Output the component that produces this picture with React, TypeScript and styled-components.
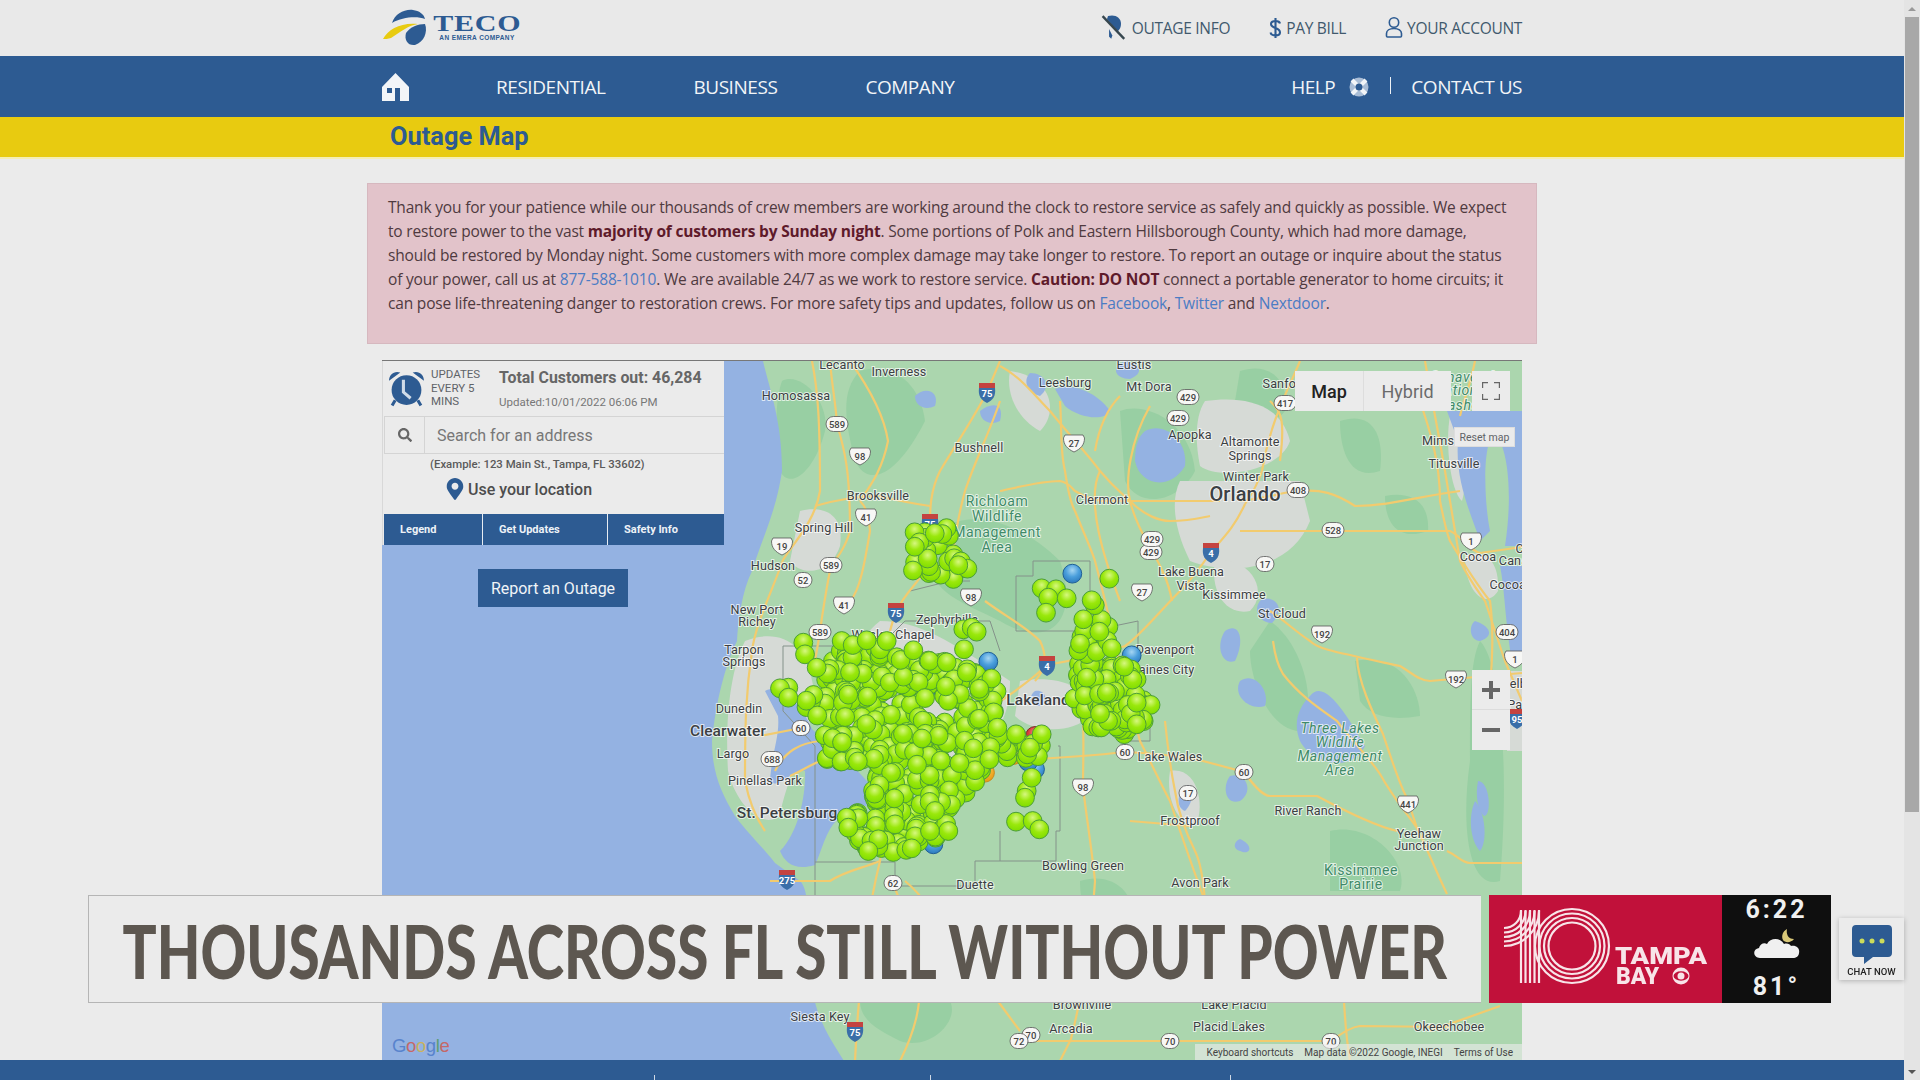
import React from 'react';
import styled, { createGlobalStyle } from 'styled-components';
import { FaSearch, FaMapMarkerAlt } from 'react-icons/fa';

const GlobalStyle = createGlobalStyle`
  html, body { margin: 0; padding: 0; height: 100%; overflow: hidden; background: #ebebeb; }
  #root { height: 100%; }
`;

const Shell = styled.div`
  display: flex;
  height: 1080px;
  width: 1920px;
  overflow: hidden;
`;
const Page = styled.div`
  width: 1904px;
  height: 1080px;
  display: flex;
  flex-direction: column;
  overflow: hidden;
  font-family: "Open Sans", "Noto Sans", sans-serif;
`;
const Scrollbar = styled.div`
  width: 16px;
  height: 1080px;
  background: #e4e4e4;
  display: flex;
  flex-direction: column;
  align-items: center;
`;
const ScrollArrow = styled.div<{ $down?: boolean }>`
  height: 17px;
  width: 16px;
  display: flex;
  align-items: center;
  justify-content: center;
  margin-top: ${({ $down }) => ($down ? 'auto' : '0')};
  &::after {
    content: '';
    border-left: 4px solid transparent;
    border-right: 4px solid transparent;
    ${({ $down }) => ($down ? 'border-top: 4px solid #555;' : 'border-bottom: 4px solid #999;')}
  }
`;
const ScrollThumb = styled.div`
  width: 14px;
  height: 795px;
  background: #a8a8a8;
`;
const Container = styled.div`
  width: 1140px;
  margin: 0 auto;
  display: flex;
  align-items: center;
`;

const UtilityBar = styled.div`
  height: 56px;
  background: #e9e9e9;
  flex: none;
`;
const UtilityInner = styled(Container)`
  height: 56px;
  justify-content: space-between;
`;
const Logo = styled.div`
  display: flex;
  align-items: center;
  height: 40px;
`;
const LogoWords = styled.div`
  display: flex;
  flex-direction: column;
  align-items: center;
  width: 90px;
  margin-top: -3px;
`;
const LogoName = styled.span`
  font-family: "Liberation Serif", serif;
  font-weight: 700;
  font-size: 24px;
  line-height: 22px;
  letter-spacing: 0.6px;
  color: #2d5b92;
  display: inline-block;
  transform: scaleX(1.25);
`;
const LogoTag = styled.span`
  font-family: "Liberation Sans", sans-serif;
  font-size: 6.5px;
  font-weight: 700;
  line-height: 8px;
  color: #2d5b92;
  letter-spacing: 0.4px;
  white-space: nowrap;
`;
const UtilityLinks = styled.div`
  display: flex;
  gap: 39px;
  align-items: center;
`;
const UtilityLink = styled.a`
  display: flex;
  align-items: center;
  gap: 4px;
  color: #41596d;
  font-size: 15.5px;
  letter-spacing: -0.3px;
  white-space: nowrap;
`;

const NavBar = styled.nav`
  height: 61px;
  background: #2d5b92;
  flex: none;
`;
const NavInner = styled(Container)`
  height: 61px;
`;
const NavLinks = styled.div`
  display: flex;
  gap: 88px;
  margin-left: 87px;
`;
const NavLink = styled.a`
  color: #f2f5f8;
  font-size: 19px;
  letter-spacing: -0.45px;
  white-space: nowrap;
`;
const NavRight = styled.div`
  margin-left: auto;
  display: flex;
  align-items: center;
`;
const NavDivider = styled.span`
  width: 1px;
  height: 17px;
  background: #eef2f6;
  margin: -3px 20px 0 21px;
`;

const TitleBand = styled.div`
  height: 40px;
  background: #e8cb10;
  border-bottom: 2px solid #f4eeb4;
  flex: none;
`;
const TitleInner = styled(Container)`
  height: 38px;
`;
const PageTitle = styled.h1`
  margin: 0 0 0 8px;
  font-family: "Roboto", sans-serif;
  font-weight: 700;
  font-size: 25.4px;
  color: #2d5b92;
`;

const AlertBox = styled.div`
  width: 1170px;
  height: 161px;
  box-sizing: border-box;
  margin: 24px auto 16px;
  padding: 11px 20px 0;
  background: #e2c3ca;
  border: 1px solid #d6b8bf;
  color: #4f3a3f;
  font-size: 15.5px;
  line-height: 24px;
  letter-spacing: -0.18px;
  flex: none;
  white-space: nowrap;
`;
const Strong = styled.strong`
  color: #5e1a2a;
  font-weight: 700;
`;
const AlertLink = styled.a`
  color: #4b7cc4;
`;

const MapFrame = styled.div`
  position: relative;
  width: 1140px;
  height: 700px;
  margin: 0 auto;
  flex: none;
  overflow: hidden;
  background: #94b2e2;
  border-top: 1px solid #777;
  box-sizing: border-box;
`;
const MapCanvas = styled.svg`
  display: block;
  width: 1140px;
  height: 700px;
`;
const Footer = styled.footer`
  height: 20px;
  flex: none;
  background: #2d5b92;
  position: relative;
  display: grid;
  grid-template-columns: 655px 276px 300px 1fr;
`;
const FooterCell = styled.div`
  height: 5px;
  margin-top: 15px;
  border-right: 1px solid #cfd9e6;
  &:last-child { border-right: 0; }
`;

const SidePanel = styled.div`
  position: absolute;
  left: 0;
  top: 0;
  width: 342px;
  background: #ebebeb;
  border-left: 1px solid #d8d8d8;
  box-sizing: border-box;
  font-family: "Roboto", sans-serif;
`;
const StatusRow = styled.div`
  height: 55px;
  display: flex;
  align-items: center;
  padding-left: 5px;
`;
const UpdatesNote = styled.div`
  width: 68px;
  margin-left: 6px;
  font-size: 11.5px;
  line-height: 13.5px;
  color: #5f6368;
`;
const StatusText = styled.div`
  display: flex;
  flex-direction: column;
  gap: 9px;
`;
const TotalOut = styled.div`
  font-size: 15.9px;
  font-weight: 700;
  color: #666;
  line-height: 18px;
`;
const UpdatedAt = styled.div`
  font-size: 11.5px;
  color: #777;
  line-height: 13px;
`;
const SearchRow = styled.div`
  height: 38px;
  display: flex;
  margin-left: 1px;
  border-top: 1px solid #d4d4d4;
  border-bottom: 1px solid #d4d4d4;
  box-sizing: border-box;
`;
const SearchIconCell = styled.div`
  width: 39px;
  display: flex;
  align-items: center;
  justify-content: center;
  border-right: 1px solid #d4d4d4;
  border-left: 1px solid #d4d4d4;
  color: #666;
  font-size: 14px;
`;
const SearchInput = styled.div`
  flex: 1;
  padding-left: 12px;
  display: flex;
  align-items: center;
  font-size: 16px;
  color: #777;
`;
const ExampleText = styled.div`
  margin: 2px 0 0 47px;
  font-size: 11.4px;
  font-weight: 500;
  line-height: 16px;
  color: #5a5a5a;
`;
const LocationRow = styled.div`
  display: flex;
  align-items: center;
  gap: 2px;
  margin: 5px 0 0 61px;
  height: 24px;
  font-size: 16px;
  font-weight: 500;
  color: #4d4d4d;
  svg { color: #2d5b92; font-size: 22px; }
`;
const TabRow = styled.div`
  height: 31px;
  margin: 13px 0 0 1px;
  display: grid;
  grid-template-columns: 99px 125px 1fr;
  background: #2d5b92;
`;
const Tab = styled.div`
  display: flex;
  align-items: center;
  padding-left: 16px;
  color: #eef2f7;
  font-size: 11px;
  font-weight: 700;
  border-right: 1px solid #e8edf3;
  &:last-child { border-right: 0; }
`;
const ReportButton = styled.button`
  position: absolute;
  left: 96px;
  top: 208px;
  width: 150px;
  height: 38px;
  border: 0;
  padding: 0;
  background: #2d5b92;
  color: #f0f4f8;
  font-family: "Roboto", sans-serif;
  font-size: 16px;
`;

const MapTypeGroup = styled.div`
  position: absolute;
  left: 913px;
  top: 10px;
  height: 40px;
  display: flex;
  background: #ebebeb;
  font-family: "Roboto", sans-serif;
  font-size: 18px;
`;
const MapType = styled.div<{ $active?: boolean }>`
  display: flex;
  align-items: center;
  justify-content: center;
  width: ${({ $active }) => ($active ? '68px' : '87px')};
  color: ${({ $active }) => ($active ? '#222' : '#6b6b6b')};
  font-weight: ${({ $active }) => ($active ? 500 : 400)};
  border-right: ${({ $active }) => ($active ? '1px solid #ddd' : '0')};
`;
const ControlBox = styled.div`
  position: absolute;
  left: 1090px;
  width: 38px;
  background: #ebebeb;
  display: flex;
  align-items: center;
  justify-content: center;
`;
const FullscreenButton = styled(ControlBox)`
  top: 10px;
  height: 40px;
`;
const ZoomGroup = styled(ControlBox)`
  top: 309px;
  height: 80px;
  flex-direction: column;
`;
const ZoomButton = styled.div`
  height: 40px;
  width: 100%;
  display: flex;
  align-items: center;
  justify-content: center;
  &:first-child { border-bottom: 1px solid #dcdcdc; box-sizing: border-box; }
`;
const ResetMap = styled.div`
  position: absolute;
  left: 1072px;
  top: 66px;
  width: 61px;
  height: 20px;
  background: #ebebeb;
  border: 1px solid #ddd;
  box-sizing: border-box;
  font-family: "Roboto", sans-serif;
  font-size: 10.5px;
  color: #5f6368;
  display: flex;
  align-items: center;
  justify-content: center;
`;
const Attribution = styled.div`
  position: absolute;
  right: 0;
  bottom: 0;
  height: 16px;
  padding: 0 9px 0 12px;
  display: flex;
  align-items: center;
  gap: 11px;
  background: rgba(235, 235, 235, 0.62);
  font-family: "Roboto", sans-serif;
  font-size: 10px;
  color: #444;
  white-space: nowrap;
`;
const GoogleMark = styled.div`
  position: absolute;
  left: 10px;
  bottom: 3px;
  font-family: "Liberation Sans", sans-serif;
  font-size: 18.5px;
  letter-spacing: -0.4px;
  opacity: 0.8;
`;
const GoogleLetter = styled.span<{ $c: string }>`
  color: ${({ $c }) => $c};
`;

const LowerThird = styled.div`
  position: fixed;
  left: 88px;
  top: 895px;
  height: 108px;
  display: flex;
`;
const HeadlinePanel = styled.div`
  width: 1393px;
  box-sizing: border-box;
  background: #ebebeb;
  border: 1px solid #b5b5b5;
  border-right: 0;
  padding: 3px 0 0;
  display: flex;
  align-items: center;
  justify-content: center;
  overflow: hidden;
`;
const Headline = styled.div`
  font-family: "Lato", sans-serif;
  font-weight: 900;
  font-size: 74px;
  line-height: 100px;
  color: #5d5750;
  white-space: nowrap;
  transform: scaleX(0.765);
  flex: none;
`;
const BrandPanel = styled.div`
  width: 233px;
  margin-left: 8px;
  background: #c1113a;
  flex: none;
`;
const BrandText = styled.text`
  font-family: "Roboto", sans-serif;
  font-weight: 900;
  font-size: 23px;
  fill: #f8e4e8;
`;
const WeatherPanel = styled.div`
  width: 109px;
  background: #0f0f0f;
  flex: none;
  display: flex;
  flex-direction: column;
  align-items: center;
  justify-content: space-between;
  color: #f0f0f0;
  font-family: "Roboto", sans-serif;
  font-weight: 700;
  font-size: 25px;
  letter-spacing: 3px;
  padding: 0 0 1px;
  box-sizing: border-box;
`;
const WeatherLine = styled.div`
  line-height: 30px;
`;
const WeatherGlyph = styled.div`
  display: flex;
  margin-bottom: 9px;
`;
const ChatWidget = styled.div`
  position: fixed;
  left: 1839px;
  top: 918px;
  width: 65px;
  height: 62px;
  background: #ebebeb;
  box-shadow: 0 1px 5px rgba(0, 0, 0, 0.25);
  display: flex;
  flex-direction: column;
  align-items: center;
  padding-top: 6px;
  box-sizing: border-box;
`;
const ChatLabel = styled.div`
  font-family: "Roboto", sans-serif;
  font-size: 9.5px;
  font-weight: 500;
  color: #222;
  margin-top: 1px;
  white-space: nowrap;
`;

// map drawing, all values are page coordinates (viewBox starts at the map corner)
type Kind = 'city' | 'park' | 'italic' | 'big' | 'metro';
const labelSize: Record<Kind, string> = { city: '12.6px', park: '14px', italic: '14px', big: '15.5px', metro: '20px' };
const MapLabel = styled.text<{ $kind?: Kind }>`
  font-family: "Roboto", sans-serif;
  text-anchor: middle;
  paint-order: stroke;
  stroke: rgba(255, 255, 255, 0.7);
  stroke-width: 2px;
  font-size: ${({ $kind }) => labelSize[$kind || 'city']};
  font-weight: ${({ $kind }) => ($kind === 'big' || $kind === 'metro' ? 500 : 400)};
  letter-spacing: ${({ $kind }) => ($kind === 'park' || $kind === 'italic' ? '0.5px' : '0.1px')};
  fill: ${({ $kind }) => ($kind === 'park' || $kind === 'italic' ? '#3f8a68' : '#3c4043')};
  font-style: ${({ $kind }) => ($kind === 'italic' ? 'italic' : 'normal')};
`;
const ShieldText = styled.text`
  font-family: "Roboto", sans-serif;
  font-size: 9.5px;
  font-weight: 500;
  text-anchor: middle;
  fill: #444;
`;
const InterstateText = styled.text`
  font-family: "Roboto", sans-serif;
  font-size: 9.5px;
  font-weight: 700;
  text-anchor: middle;
  fill: #fff;
`;

const water: string[] = [
  'M382 360H763C770 390 782 420 782 470C776 510 765 530 752 570C742 590 738 620 737 640C725 665 716 700 712 740C712 770 720 790 735 815C750 835 762 845 775 862L800 880C810 890 808 920 811 980C816 1020 832 1040 844 1060H382Z',
  'M765 690C780 682 800 700 812 728C830 745 850 760 872 786C878 800 860 812 838 818C825 830 822 850 815 864C795 870 785 862 780 850C800 830 806 790 805 770C790 768 780 790 770 780C772 750 780 735 778 715Z',
  'M1447 410H1522V545H1505C1512 500 1510 450 1495 432C1482 440 1484 500 1490 530L1480 540C1470 510 1455 480 1458 440Z',
  'M1500 565H1522V660H1512C1505 620 1505 590 1500 565Z',
  'M1125 360C1140 362 1145 372 1130 378C1115 378 1110 366 1125 360Z',
  'M1055 388C1075 380 1100 395 1110 410C1105 420 1080 418 1065 405Z',
  'M1145 430C1165 420 1188 440 1185 465C1170 490 1140 485 1135 460C1135 445 1138 436 1145 430Z',
  'M1030 372C1045 372 1052 385 1040 395C1028 392 1022 380 1030 372Z',
  'M1225 630C1240 620 1245 640 1235 660C1222 665 1215 645 1225 630Z',
  'M1262 598C1278 595 1285 610 1272 622C1258 622 1252 606 1262 598Z',
  'M1310 695C1325 675 1350 720 1365 745C1350 775 1310 760 1300 740C1292 720 1300 705 1310 695Z',
  'M1240 680C1255 670 1270 690 1265 705C1250 710 1232 695 1240 680Z',
  'M1230 775C1245 770 1255 790 1240 800C1225 805 1222 785 1230 775Z',
  'M1185 785C1195 780 1195 800 1185 810C1175 806 1178 792 1185 785Z',
  'M1240 838C1255 845 1250 855 1240 850C1232 848 1234 840 1240 838Z',
  'M1475 800C1485 810 1488 840 1480 850C1470 840 1468 815 1475 800Z',
  'M1478 780C1490 780 1492 815 1484 815C1478 810 1475 795 1478 780Z',
  'M1475 620C1490 625 1495 635 1480 640C1470 640 1468 625 1475 620Z',
  'M980 410C990 402 1005 400 1000 420C990 425 980 420 980 410Z',
  'M915 395C925 385 940 390 935 405C925 410 915 405 915 395Z',
  'M1035 690C1045 688 1050 700 1040 705C1030 705 1028 695 1035 690Z',
];
const darkLand: string[] = [
  'M782 380C800 370 830 400 825 430C815 470 790 490 780 470C775 430 775 400 782 380Z',
  'M860 370C890 360 920 380 925 420C900 470 870 490 855 460C845 420 840 390 860 370Z',
  'M930 540C960 500 1020 520 1060 560C1080 620 1050 650 1000 620C960 600 920 590 930 540Z',
  'M1120 410C1145 400 1190 420 1195 470C1180 500 1140 510 1125 480Z',
  'M1240 370C1270 360 1290 380 1285 410C1270 430 1240 420 1235 400Z',
  'M1340 420C1370 410 1385 430 1380 470C1350 480 1340 450 1340 420Z',
  'M1385 495C1410 490 1430 500 1428 530C1400 540 1385 525 1385 495Z',
  'M1355 660C1400 650 1420 690 1420 715C1390 720 1370 715 1360 700Z',
  'M1270 620C1300 640 1320 700 1300 730C1270 730 1250 680 1250 650Z',
  'M1330 830C1370 820 1410 860 1400 890H1330Z',
  'M1480 640C1500 660 1510 760 1500 880C1470 890 1460 830 1470 760C1470 700 1470 660 1480 640Z',
  'M860 1000H950C960 1020 930 1050 900 1040C880 1030 860 1020 860 1000Z',
  'M1080 880C1110 870 1140 890 1130 925C1100 940 1080 920 1080 880Z',
];
const urban: string[] = [
  'M1180 480H1300L1310 520C1290 570 1230 575 1190 560C1175 530 1170 500 1180 480Z',
  'M1205 400C1240 395 1280 400 1290 440C1280 470 1220 480 1200 465C1195 440 1195 415 1205 400Z',
  'M800 510C820 505 845 510 840 545C830 575 800 575 790 560Z',
  'M745 640C770 630 810 630 815 700C810 735 785 780 780 815C760 830 735 800 728 770C725 720 730 670 745 640Z',
  'M1020 680C1050 675 1090 680 1090 715C1070 735 1030 730 1015 715Z',
  'M1450 415C1470 420 1470 470 1462 500C1450 490 1445 440 1450 415Z',
  'M1465 555C1480 548 1500 555 1498 590C1485 610 1465 590 1465 555Z',
  'M880 620C920 620 950 640 1010 680C1010 760 940 770 870 760C830 740 830 660 880 620Z',
  'M1215 560C1250 555 1270 590 1250 610C1225 615 1210 590 1215 560Z',
  'M1170 770C1200 765 1205 810 1195 825C1180 825 1165 800 1170 770Z',
  'M1010 370C1050 375 1060 410 1040 430C1020 420 1005 395 1010 370Z',
  'M1507 670H1522V750H1507Z',
];
const roads: string[] = [
  'M1000 360L987 391C975 415 958 440 940 470C930 490 930 510 930 522V560C926 575 905 590 896 611C885 640 880 680 880 720C884 770 885 820 880 860C870 900 860 960 855 1060',
  'M1000 400C990 430 975 460 965 490C958 515 955 535 952 560',
  'M812 360C818 390 820 420 820 490C815 520 795 540 783 559C772 590 755 625 752 650C746 690 745 720 745 780C750 805 758 820 765 830',
  'M830 360C832 385 836 405 837 423C845 450 850 470 850 530C845 548 835 560 831 564C826 590 822 615 820 631L815 660',
  'M1245 503C1235 525 1225 535 1211 551C1198 570 1185 585 1180 590C1160 610 1140 635 1125 645C1095 655 1070 660 1047 664C1030 680 1015 690 1005 697C985 712 965 720 950 725L880 730',
  'M1000 365C1020 375 1035 395 1050 410C1070 435 1085 450 1100 470C1115 488 1125 495 1130 500C1145 515 1160 520 1170 520C1190 520 1200 517 1210 515',
  'M1060 400C1062 430 1060 450 1065 470C1068 490 1072 505 1075 510C1085 535 1092 550 1095 560C1103 590 1106 605 1110 620C1116 650 1120 665 1125 680C1130 710 1136 725 1140 740C1155 770 1162 785 1170 800C1180 830 1190 860 1205 900',
  'M815 505C840 498 860 495 878 495C900 500 915 503 930 505M1000 490C1015 487 1040 480 1060 480C1070 482 1072 488 1075 490C1085 496 1095 499 1102 500H1220',
  'M1240 530H1450C1462 535 1470 550 1480 552L1522 546',
  'M1240 500C1270 497 1285 490 1300 490C1320 488 1335 492 1355 505C1390 505 1420 495 1460 490',
  'M1420 400C1430 430 1440 460 1440 500C1444 520 1448 535 1450 540C1465 565 1482 590 1490 600C1494 630 1492 660 1490 690',
  'M1425 360C1432 400 1440 440 1445 470C1450 500 1455 530 1460 560C1470 580 1478 590 1485 600C1492 620 1498 640 1505 660L1522 700',
  'M1270 610C1285 620 1295 630 1310 640C1318 648 1330 650 1400 665C1412 672 1420 680 1430 680L1522 672',
  'M1273 640C1275 655 1278 665 1283 673C1300 695 1320 708 1337 720C1352 740 1368 755 1380 773C1392 795 1405 810 1417 827C1428 850 1436 870 1447 893',
  'M1357 657C1358 680 1372 710 1383 733C1392 760 1400 785 1407 797L1417 827',
  'M1203 760L1244 771C1252 782 1262 795 1270 795H1317C1345 810 1375 825 1397 830',
  'M1447 850C1458 855 1462 862 1470 862H1522',
  'M1020 1040C1040 1040 1060 1040 1071 1040H1331C1345 1030 1352 1026 1360 1025L1449 1026',
  'M801 727L760 735M820 740C800 742 785 750 775 770M820 760C808 765 798 772 790 775',
  'M1083 720C1084 745 1083 765 1083 786C1087 820 1092 850 1095 880C1092 920 1090 960 1071 1038L1060 1060',
  'M985 600C1005 615 1025 625 1040 640C1050 660 1042 672 1035 680',
  'M1000 760C1040 758 1090 755 1125 751C1150 752 1180 755 1203 760',
  'M1130 820L1190 825M1165 720C1168 750 1172 775 1175 790C1178 810 1185 830 1195 850C1200 860 1203 875 1205 900',
  'M905 880C930 900 960 950 1020 1030',
  'M1340 930C1345 950 1340 1000 1350 1060M1430 1030L1500 1005M1475 360C1470 385 1465 395 1460 415',
  'M850 360C875 395 885 420 888 440C882 470 870 485 860 500',
  'M1300 360C1290 385 1270 420 1262 470C1255 490 1250 495 1245 503',
  'M1150 405C1130 440 1125 480 1130 500C1140 540 1165 560 1172 600',
  'M1100 470C1085 500 1105 560 1120 600M1120 395C1110 405 1100 420 1095 450',
  'M1270 400C1282 410 1285 420 1280 460',
  'M850 600C860 590 865 560 870 530C868 510 865 505 860 500',
  'M900 1060C930 1000 925 960 892 880M770 880H830C845 870 860 868 880 860',
];
const borders: string[] = [
  'M783 645H880L905 620H990L1000 650',
  'M783 645V710L815 745V1000',
  'M815 861H895V885H975V860H1000',
  'M1016 575H1033V560H1090V630',
  'M1016 575V630H1090L1138 620H1138V700',
  'M1000 830V860H1056V830H1060V745H1058',
  'M1118 720V740H1150V700',
  'M910 590L950 580H970',
];
const ovals: [string, number, number][] = [
  ['589', 837, 423], ['429', 1188, 396], ['429', 1178, 417], ['589', 831, 564], ['429', 1151, 551],
  ['417', 1285, 402], ['408', 1298, 489], ['528', 1333, 529], ['404', 1507, 631], ['17', 1265, 563],
  ['17', 1188, 792], ['60', 1244, 771], ['52', 803, 579], ['589', 820, 631],
  ['60', 801, 727], ['60', 1125, 751], ['688', 772, 758], ['62', 893, 882], ['70', 1031, 1034],
  ['72', 1019, 1040], ['70', 1170, 1040], ['70', 1331, 1040], ['429', 1152, 538],
];
const usShields: [string, number, number][] = [
  ['98', 860, 455], ['41', 866, 516], ['19', 782, 545], ['27', 1074, 442], ['1', 1471, 540],
  ['192', 1322, 633], ['192', 1456, 678], ['441', 1408, 803], ['41', 844, 604], ['98', 971, 596],
  ['27', 1142, 591], ['98', 1083, 786], ['1', 1515, 658],
];
const interstates: [string, number, number][] = [
  ['75', 987, 391], ['75', 930, 522], ['75', 896, 611], ['4', 1047, 664], ['4', 1211, 551],
  ['275', 787, 878], ['95', 1517, 717], ['75', 855, 1030],
];
const labels: [string, number, number, Kind?][] = [
  ['Lecanto', 842, 368], ['Inverness', 899, 375], ['Homosassa', 796, 399], ['Bushnell', 979, 451],
  ['Leesburg', 1065, 386], ['Eustis', 1134, 368], ['Mt Dora', 1149, 390], ['Apopka', 1190, 438],
  ['Altamonte', 1250, 445], ['Springs', 1250, 459], ['Winter Park', 1256, 480], ['Brooksville', 878, 499],
  ['Clermont', 1102, 503], ['Orlando', 1245, 500, 'metro'], ['Spring Hill', 824, 531],
  ['Richloam', 997, 505, 'park'], ['Wildlife', 997, 520, 'park'], ['Management', 997, 536, 'park'], ['Area', 997, 551, 'park'],
  ['Lake Buena', 1191, 575], ['Vista', 1191, 589], ['Sanford', 1285, 387], ['New Port', 757, 613], ['Richey', 757, 625],
  ['Tarpon', 744, 653], ['Springs', 744, 665], ['Dunedin', 739, 712], ['Clearwater', 728, 735, 'big'],
  ['Largo', 733, 757], ['Pinellas Park', 765, 784], ['St. Petersburg', 787, 817, 'big'],
  ['Wesley Chapel', 893, 638], ['Zephyrhills', 947, 623], ['Duette', 975, 888], ['Hudson', 773, 569],
  ['Lakeland', 1038, 704, 'big'], ['Davenport', 1165, 653], ['Haines City', 1162, 673], ['Lake Wales', 1170, 760],
  ['Bowling Green', 1083, 869], ['River Ranch', 1308, 814], ['Frostproof', 1190, 824], ['Yeehaw', 1419, 837],
  ['Junction', 1419, 849], ['Avon Park', 1200, 886], ['Three Lakes', 1340, 732, 'italic'], ['Wildlife', 1340, 746, 'italic'],
  ['Management', 1340, 760, 'italic'], ['Area', 1340, 774, 'italic'], ['Kissimmee', 1361, 874, 'park'], ['Prairie', 1361, 888, 'park'],
  ['Mims', 1438, 444], ['Titusville', 1454, 467], ['Cocoa', 1478, 560], ['Cape', 1530, 552], ['Canaveral', 1527, 564],
  ['Cocoa Beach', 1527, 588], ['St Cloud', 1282, 617], ['Kissimmee', 1234, 598], ['Siesta Key', 820, 1020],
  ['Arcadia', 1071, 1032], ['Placid Lakes', 1229, 1030], ['Okeechobee', 1449, 1030], ['Brownville', 1082, 1008], ['Lake Placid', 1234, 1008],
  ['Melbourne', 1529, 687], ['Palm Bay', 1534, 708],
  ['Canaveral', 1462, 381, 'italic'], ['National', 1462, 394, 'italic'], ['Seashore', 1462, 409, 'italic'],
];

const rng = (seed: number) => () => {
  seed = (seed + 0x6d2b79f5) | 0;
  let t = Math.imul(seed ^ (seed >>> 15), 1 | seed);
  t = (t + Math.imul(t ^ (t >>> 7), 61 | t)) ^ t;
  return ((t ^ (t >>> 14)) >>> 0) / 4294967296;
};
type Pt = [number, number];
const inPoly = (p: Pt, poly: Pt[]) => {
  let inside = false;
  for (let i = 0, j = poly.length - 1; i < poly.length; j = i++) {
    const [xi, yi] = poly[i];
    const [xj, yj] = poly[j];
    if (yi > p[1] !== yj > p[1] && p[0] < ((xj - xi) * (p[1] - yi)) / (yj - yi) + xi) inside = !inside;
  }
  return inside;
};
// polygons are read off the 3x crop of the marker area
const fromCrop = (pts: Pt[]): Pt[] => pts.map(([x, y]) => [760 + x / 3, 500 + y / 3]);
const scatter = (seed: number, count: number, raw: Pt[]): Pt[] => {
  const poly = fromCrop(raw);
  const next = rng(seed);
  const xs = poly.map((p) => p[0]);
  const ys = poly.map((p) => p[1]);
  const [x0, x1, y0, y1] = [Math.min(...xs), Math.max(...xs), Math.min(...ys), Math.max(...ys)];
  const out: Pt[] = [];
  while (out.length < count) {
    const p: Pt = [x0 + next() * (x1 - x0), y0 + next() * (y1 - y0)];
    if (inPoly(p, poly)) out.push(p);
  }
  return out;
};
const greenMarkers: Pt[] = [
  ...scatter(11, 470, [[130, 590], [190, 540], [230, 440], [330, 430], [500, 470], [590, 490], [715, 530], [715, 680], [850, 730], [840, 770], [700, 790], [640, 850], [610, 920], [560, 1000], [450, 1050], [330, 1060], [250, 970], [330, 880], [350, 800], [200, 780], [180, 660], [130, 630]]),
  ...scatter(5, 30, [[450, 90], [560, 80], [630, 200], [590, 255], [530, 220], [450, 220]]),
  ...scatter(8, 110, [[925, 520], [960, 480], [1100, 480], [1175, 600], [1175, 660], [1090, 710], [1000, 680], [950, 630]]),
  ...scatter(9, 16, [[950, 340], [1000, 300], [1060, 350], [1060, 470], [950, 460]]),
  ...fromCrop([[85, 560], [60, 562], [85, 590], [130, 425], [135, 460], [170, 500], [768, 962], [818, 960], [838, 985], [800, 870], [795, 890], [815, 830], [610, 385], [635, 380], [650, 392], [612, 445], [845, 262], [888, 265], [865, 290], [858, 335], [920, 292], [995, 298], [1048, 233], [970, 355], [1018, 392], [960, 428], [1055, 442], [245, 420], [278, 432], [320, 418], [380, 420], [460, 448], [508, 480], [560, 484], [712, 680], [768, 700], [845, 700], [810, 740], [688, 775], [640, 742], [260, 950], [265, 980], [565, 990], [525, 930], [455, 1042], [325, 1050], [405, 970], [510, 990], [1130, 670], [1020, 638], [1040, 575], [980, 530], [1093, 497], [1130, 605]]),
];
const blueMarkers: Pt[] = fromCrop([[937, 218], [208, 528], [685, 482], [1115, 463], [520, 1030], [825, 805], [805, 782], [510, 555]]);
const redMarkers: Pt[] = fromCrop([[590, 705], [715, 708], [825, 705]]);
const orangeMarkers: Pt[] = fromCrop([[760, 762], [675, 815], [480, 480]]);

function Markers({ points, fill, stroke }: { points: Pt[]; fill: string; stroke: string }) {
  return (
    <g>
      {points.map(([x, y], i) => (
        <circle key={i} cx={x} cy={y} r={9.4} fill={`url(#${fill})`} stroke={stroke} strokeWidth={1} />
      ))}
    </g>
  );
}

function MarkerGradient({ id, light, mid, dark }: { id: string; light: string; mid: string; dark: string }) {
  return (
    <radialGradient id={id} cx="50%" cy="32%" r="70%">
      <stop offset="0%" stopColor={light} />
      <stop offset="50%" stopColor={mid} />
      <stop offset="100%" stopColor={dark} />
    </radialGradient>
  );
}

function MapDrawing() {
  return (
    <MapCanvas viewBox="382 360 1140 700">
      <defs>
        <MarkerGradient id="mGreen" light="#d6f780" mid="#9ae80c" dark="#7edc00" />
        <MarkerGradient id="mBlue" light="#a5d5f2" mid="#4b9fdc" dark="#2a77bb" />
        <MarkerGradient id="mRed" light="#f0908a" mid="#d83c3c" dark="#b01e24" />
        <MarkerGradient id="mOrange" light="#fbd986" mid="#f3b230" dark="#e6950f" />
      </defs>
      <rect x="382" y="360" width="1140" height="700" fill="#abd6ae" />
      {darkLand.map((d, i) => <path key={i} d={d} fill="#98cfa3" />)}
      {urban.map((d, i) => <path key={i} d={d} fill="#d6dad6" />)}
      {water.map((d, i) => <path key={i} d={d} fill="#94b2e2" />)}
      {borders.map((d, i) => <path key={i} d={d} fill="none" stroke="#84928a" strokeWidth={1} />)}
      {roads.map((d, i) => <path key={i} d={d} fill="none" stroke="#f2cb6e" strokeWidth={2.2} />)}
      {labels.map(([t, x, y, k], i) => <MapLabel key={i} x={x} y={y} $kind={k}>{t}</MapLabel>)}
      {ovals.map(([t, x, y], i) => (
        <g key={i}>
          <rect x={x - (t.length > 2 ? 11 : 9)} y={y - 7.5} width={t.length > 2 ? 22 : 18} height={15} rx={7.5} fill="#f7f7f5" stroke="#555" strokeWidth={0.8} />
          <ShieldText x={x} y={y + 3.5}>{t}</ShieldText>
        </g>
      ))}
      {usShields.map(([t, x, y], i) => (
        <g key={i}>
          <path d={`M${x - 9} ${y - 8}h18l1.5 3c0 7 -4 11 -10.5 14c-6.500 -3 -10.500 -7 -10.500 -14z`} fill="#f7f7f5" stroke="#555" strokeWidth={0.8} />
          <ShieldText x={x} y={y + 3.5}>{t}</ShieldText>
        </g>
      ))}
      {interstates.map(([t, x, y], i) => (
        <g key={i}>
          <path d={`M${x - 8} ${y - 4}h16c1 8 -2 12 -8 15c-6 -3 -9 -7 -8 -15z`} fill="#3a6ea8" />
          <path d={`M${x - 8} ${y - 9}h16v5h-16z`} fill="#c4433f" />
          <InterstateText x={x} y={y + 5}>{t}</InterstateText>
        </g>
      ))}
      <Markers points={orangeMarkers} fill="mOrange" stroke="#c98a1e" />
      <Markers points={redMarkers} fill="mRed" stroke="#7f2626" />
      <Markers points={blueMarkers} fill="mBlue" stroke="#1f5f96" />
      <Markers points={greenMarkers} fill="mGreen" stroke="#4c9e38" />
    </MapCanvas>
  );
}

function TecoSwoosh() {
  return (
    <svg width="50" height="38" viewBox="0 0 50 38">
      <path d="M10 14C13 5 22 0 31 1c6 .7 11 4 12 9-8-3-23-2-33 4z" fill="#2d5b92" />
      <path d="M1 30C6 20 20 13 36 15c-9 1-18 8-27 14-3 1-6 1-8 1z" fill="#e8cb10" />
      <path d="M24 24c4-6 12-9 19-9 3 8-1 18-10 21-7 1-11-5-9-12z" fill="#2d5b92" />
    </svg>
  );
}
function OutageIcon() {
  return (
    <svg width="27" height="26" viewBox="0 0 24 24">
      <path d="M6 1c6-2 12 1 12 7 0 3-1 5-3 7L5 4z" fill="#2d5b92" />
      <path d="M1 1l20 21" stroke="#37474f" strokeWidth="2.200" fill="none" />
      <path d="M7 13l3 6-1 3-2-2z" fill="#2d5b92" />
    </svg>
  );
}
function DollarIcon() {
  return (
    <svg width="13" height="24" viewBox="0 0 13 24">
      <path d="M11 7.500C10.500 5.500 8.500 5 6.500 5 4 5 2 6 2 8c0 5 9 3 9 8.500C11 18.500 9 19.500 6.500 19.500 4 19.500 2 18.500 1.500 16.500M6.500 2v20" stroke="#2d5b92" strokeWidth="2.100" fill="none" />
    </svg>
  );
}
function AccountIcon() {
  return (
    <svg width="18" height="24" viewBox="0 0 18 24">
      <circle cx="9" cy="6.500" r="4.700" fill="none" stroke="#2d5b92" strokeWidth="1.600" />
      <path d="M1.500 20v-2.500c0-3 3-5 7.500-5s7.500 2 7.500 5V20c0 .6-.5 1-1 1h-13c-.5 0-1-.4-1-1z" fill="none" stroke="#2d5b92" strokeWidth="1.600" />
    </svg>
  );
}
function HomeIcon() {
  return (
    <svg width="27" height="28" viewBox="0 0 27 28">
      <path d="M13.500 0L27 14v14H18V15h-5v13H0V14z" fill="#f2f5f8" />
      <rect x="5" y="15" width="5" height="5" fill="#2d5b92" />
    </svg>
  );
}
function HelpIcon() {
  return (
    <svg width="20" height="20" viewBox="0 0 20 20" style={{ marginLeft: 14 }}>
      <circle cx="10" cy="10" r="9.500" fill="#a9bdd6" />
      <path d="M3 3l14 14M17 3L3 17" stroke="#f2f5f8" strokeWidth="4" />
      <circle cx="10" cy="10" r="3.500" fill="#2d5b92" />
    </svg>
  );
}
function ClockIcon() {
  return (
    <svg width="37" height="38" viewBox="0 0 36 36">
      <path d="M1 10C1 4 6 0 12 2zM35 10c0-6-5-10-11-8z" fill="#2d5b92" />
      <path d="M7 29l-3 5M29 29l3 5" stroke="#2d5b92" strokeWidth="3" />
      <circle cx="18" cy="19" r="14.500" fill="#2d5b92" />
      <path d="M15 9v12l7 6" stroke="#cfdbe8" strokeWidth="3" fill="none" />
    </svg>
  );
}
function FullscreenIcon() {
  return (
    <svg width="18" height="18" viewBox="0 0 18 18">
      <path d="M0 6V0h6M12 0h6v6M18 12v6h-6M6 18H0v-6" fill="none" stroke="#666" strokeWidth="2.400" />
    </svg>
  );
}
function ZoomGlyph({ plus }: { plus?: boolean }) {
  return (
    <svg width="18" height="18" viewBox="0 0 18 18">
      <path d={plus ? 'M0 9h18M9 0v18' : 'M0 9h18'} stroke="#666" strokeWidth="4" />
    </svg>
  );
}
function BrandLogo() {
  const stems = [0, 1, 2, 3, 4];
  const rings = [37, 32.500, 28, 23.500];
  return (
    <svg width="233" height="108" viewBox="1489 895 233 108">
      {stems.map((i) => (
        <g key={i} fill="none" stroke="#f8e4e8" strokeWidth="2.200">
          <path d={`M${1521 + 4.500 * i} 983V910`} />
          <path d={`M1504 ${928 + 4.500 * i}A${17 + 4.500 * i} ${17 + 4.500 * i} 0 0 0 ${1521 + 4.500 * i} 911`} />
        </g>
      ))}
      {rings.map((r) => <circle key={r} cx="1572" cy="946" r={r} fill="none" stroke="#f8e4e8" strokeWidth="2.200" />)}
      <BrandText x="1615" y="964" textLength={92} lengthAdjust="spacingAndGlyphs">TAMPA</BrandText>
      <BrandText x="1616" y="984" textLength={43} lengthAdjust="spacingAndGlyphs">BAY</BrandText>
      <circle cx="1681" cy="976" r="8.500" fill="#f8e4e8" />
      <ellipse cx="1681" cy="976" rx="7.500" ry="4.700" fill="#c1113a" />
      <circle cx="1681" cy="976" r="3.500" fill="#f8e4e8" />
    </svg>
  );
}
function WeatherIcon() {
  return (
    <svg width="46" height="36" viewBox="0 0 46 34">
      <path d="M33 2c-1 5 1 10 7 10-3 4-9 4-11 1-2-4 0-9 4-11z" fill="#d9c878" />
      <path d="M6 31c-7 0-8-9-1-10 1-4 5-6 8-4 3-6 13-7 17 0 3-1 6 0 7 2 6-1 9 3 8 7 0 3-3 5-6 5z" fill="#f0f0f0" />
    </svg>
  );
}
function ChatIcon() {
  return (
    <svg width="42" height="41" viewBox="0 0 42 41">
      <path d="M5 1h32c2.500 0 4 1.500 4 4v24c0 2.500-1.500 4-4 4H22l-9 7v-7H5c-2.500 0-4-1.500-4-4V5c0-2.500 1.500-4 4-4z" fill="#2d5b92" />
      <circle cx="11" cy="17" r="2.500" fill="#cddc5a" />
      <circle cx="21" cy="17" r="2.500" fill="#cddc5a" />
      <circle cx="31" cy="17" r="2.500" fill="#cddc5a" />
    </svg>
  );
}

export default function App() {
  return (
    <Shell>
      <GlobalStyle />
      <Page>
        <UtilityBar>
          <UtilityInner>
            <Logo>
              <TecoSwoosh />
              <LogoWords>
                <LogoName>TECO</LogoName>
                <LogoTag>AN EMERA COMPANY</LogoTag>
              </LogoWords>
            </Logo>
            <UtilityLinks>
              <UtilityLink><OutageIcon />OUTAGE INFO</UtilityLink>
              <UtilityLink><DollarIcon />PAY BILL</UtilityLink>
              <UtilityLink><AccountIcon />YOUR ACCOUNT</UtilityLink>
            </UtilityLinks>
          </UtilityInner>
        </UtilityBar>
        <NavBar>
          <NavInner>
            <HomeIcon />
            <NavLinks>
              <NavLink>RESIDENTIAL</NavLink>
              <NavLink>BUSINESS</NavLink>
              <NavLink>COMPANY</NavLink>
            </NavLinks>
            <NavRight>
              <NavLink>HELP</NavLink>
              <HelpIcon />
              <NavDivider />
              <NavLink>CONTACT US</NavLink>
            </NavRight>
          </NavInner>
        </NavBar>
        <TitleBand>
          <TitleInner>
            <PageTitle>Outage Map</PageTitle>
          </TitleInner>
        </TitleBand>
        <AlertBox>
          Thank you for your patience while our thousands of crew members are working around the clock to restore service as safely and quickly as possible. We expect<br />
          to restore power to the vast <Strong>majority of customers by Sunday night</Strong>. Some portions of Polk and Eastern Hillsborough County, which had more damage,<br />
          should be restored by Monday night. Some customers with more complex damage may take longer to restore. To report an outage or inquire about the status<br />
          of your power, call us at <AlertLink>877-588-1010</AlertLink>. We are available 24/7 as we work to restore service. <Strong>Caution: DO NOT</Strong> connect a portable generator to home circuits; it<br />
          can pose life-threatening danger to restoration crews. For more safety tips and updates, follow us on <AlertLink>Facebook</AlertLink>, <AlertLink>Twitter</AlertLink> and <AlertLink>Nextdoor</AlertLink>.
        </AlertBox>
        <MapFrame>
          <MapDrawing />
          <SidePanel>
            <StatusRow>
              <ClockIcon />
              <UpdatesNote>UPDATES<br />EVERY 5<br />MINS</UpdatesNote>
              <StatusText>
                <TotalOut>Total Customers out: 46,284</TotalOut>
                <UpdatedAt>Updated:10/01/2022 06:06 PM</UpdatedAt>
              </StatusText>
            </StatusRow>
            <SearchRow>
              <SearchIconCell><FaSearch /></SearchIconCell>
              <SearchInput>Search for an address</SearchInput>
            </SearchRow>
            <ExampleText>(Example: 123 Main St., Tampa, FL 33602)</ExampleText>
            <LocationRow><FaMapMarkerAlt />Use your location</LocationRow>
            <TabRow>
              <Tab>Legend</Tab>
              <Tab>Get Updates</Tab>
              <Tab>Safety Info</Tab>
            </TabRow>
          </SidePanel>
          <ReportButton>Report an Outage</ReportButton>
          <MapTypeGroup>
            <MapType $active>Map</MapType>
            <MapType>Hybrid</MapType>
          </MapTypeGroup>
          <FullscreenButton><FullscreenIcon /></FullscreenButton>
          <ResetMap>Reset map</ResetMap>
          <ZoomGroup>
            <ZoomButton><ZoomGlyph plus /></ZoomButton>
            <ZoomButton><ZoomGlyph /></ZoomButton>
          </ZoomGroup>
          <GoogleMark>
            <GoogleLetter $c="#4a78c8">G</GoogleLetter>
            <GoogleLetter $c="#d0564a">o</GoogleLetter>
            <GoogleLetter $c="#d8b23c">o</GoogleLetter>
            <GoogleLetter $c="#4a78c8">g</GoogleLetter>
            <GoogleLetter $c="#4f9a58">l</GoogleLetter>
            <GoogleLetter $c="#d0564a">e</GoogleLetter>
          </GoogleMark>
          <Attribution>
            <span>Keyboard shortcuts</span>
            <span>Map data ©2022 Google, INEGI</span>
            <span>Terms of Use</span>
          </Attribution>
        </MapFrame>
        <Footer>
          <FooterCell />
          <FooterCell />
          <FooterCell />
          <FooterCell />
        </Footer>
      </Page>
      <Scrollbar>
        <ScrollArrow />
        <ScrollThumb />
        <ScrollArrow $down />
      </Scrollbar>
      <LowerThird>
        <HeadlinePanel>
          <Headline>THOUSANDS ACROSS FL STILL WITHOUT POWER</Headline>
        </HeadlinePanel>
        <BrandPanel><BrandLogo /></BrandPanel>
        <WeatherPanel>
          <WeatherLine>6:22</WeatherLine>
          <WeatherGlyph><WeatherIcon /></WeatherGlyph>
          <WeatherLine>81°</WeatherLine>
        </WeatherPanel>
      </LowerThird>
      <ChatWidget>
        <ChatIcon />
        <ChatLabel>CHAT NOW</ChatLabel>
      </ChatWidget>
    </Shell>
  );
}
